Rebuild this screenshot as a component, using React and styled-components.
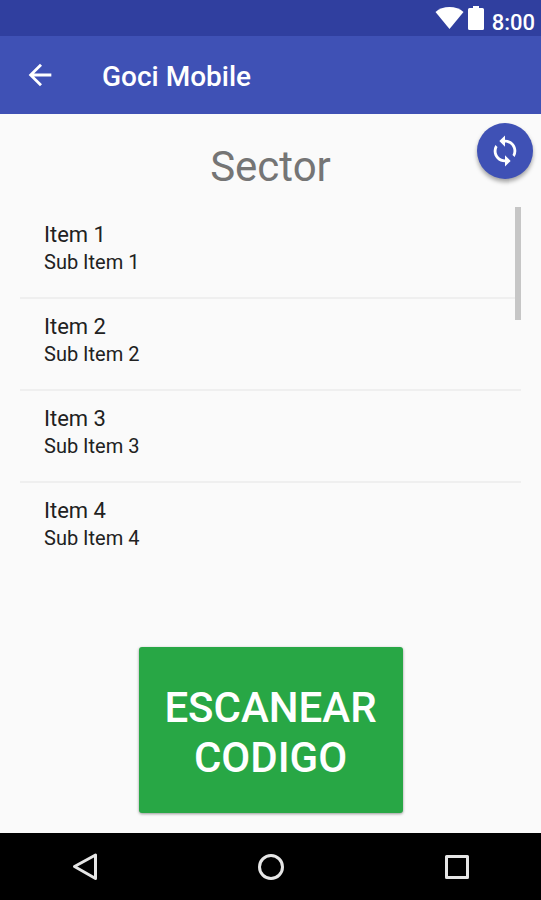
import React, { useState } from "react";
import styled, { createGlobalStyle } from "styled-components";
import { MdArrowBack, MdSync } from "react-icons/md";

const GlobalStyle = createGlobalStyle`
* {
  box-sizing: border-box;
}
body {
  margin: 0;
  background-color: #fafafa;
  font-family: Roboto, "Liberation Sans", sans-serif;
}
`
const Screen = styled.div`
display: flex;
flex-direction: column;
min-height: 100vh;
background-color: #fafafa;
`
const StatusBar = styled.div`
display: flex;
justify-content: flex-end;
gap: 4px;
height: 36px;
padding: 6px 6px 0 0;
background-color: #303f9f;
color: white;
`
const Clock = styled.span`
font-size: 22px;
line-height: 34px;
font-weight: 500;
margin-left: 4px;
`
const Toolbar = styled.header`
display: flex;
align-items: center;
gap: 45px;
height: 78px;
padding: 0 23px;
background-color: #3f51b5;
color: white;
`
const IconButton = styled.button`
display: flex;
align-items: center;
justify-content: center;
padding: 0;
border: none;
background: none;
color: inherit;
font-size: 34px;
cursor: pointer;
`
const Title = styled.h1`
margin: 0;
padding-top: 4px;
font-size: 28px;
line-height: 32px;
font-weight: 500;
`
const Content = styled.main`
position: relative;
display: flex;
flex-direction: column;
flex: 1;
padding: 25px 20px 20px;
`
const SyncButton = styled(IconButton)`
position: absolute;
top: 9px;
right: 8px;
width: 56px;
height: 56px;
border-radius: 50%;
background-color: #3f51b5;
color: white;
box-shadow: 0 3px 4px rgba(0, 0, 0, 0.35);
`
const Heading = styled.h2`
margin: 0;
font-size: 42px;
line-height: 56px;
font-weight: 400;
text-align: center;
color: #757575;
`
const ListBox = styled.div`
position: relative;
flex: 1;
margin: 12px 0 20px;
`
const List = styled.ul`
margin: 0;
padding: 0;
list-style: none;
`
const Row = styled.li`
height: 92px;
padding: 14px 24px 0;
color: #212121;
border-bottom: 2px solid #efefef;
&:last-child {
  border-bottom: none;
}
`
const ItemName = styled.p`
margin: 0;
font-size: 22px;
line-height: 28px;
`
const SubItem = styled.p`
margin: 0;
font-size: 20px;
line-height: 26px;
`
const ScrollThumb = styled.div`
position: absolute;
top: 0;
right: 0;
width: 6px;
height: 113px;
background-color: #c6c6c6;
`
const ScanButton = styled.button`
align-self: center;
width: 264px;
padding: 36px 24px 30px;
border: none;
border-radius: 3px;
background-color: #28a745;
color: white;
font-family: inherit;
font-size: 42px;
line-height: 50px;
font-weight: 500;
text-transform: uppercase;
box-shadow: 0 1px 3px rgba(0, 0, 0, 0.4);
cursor: pointer;
`
const NavBar = styled.nav`
display: flex;
align-items: center;
justify-content: space-between;
height: 67px;
padding: 0 70px;
background-color: black;
color: #e6e6e6;
`

const sectors = [
  { id: 1, name: "Item 1", sub: "Sub Item 1" },
  { id: 2, name: "Item 2", sub: "Sub Item 2" },
  { id: 3, name: "Item 3", sub: "Sub Item 3" },
  { id: 4, name: "Item 4", sub: "Sub Item 4" },
];

const WifiIcon = () => (
  <svg width="29" height="24" viewBox="0 0 29 24" fill="currentColor">
    <path d="M14.5 23 L0.5 6 C4 2.8 9 1 14.5 1 S25 2.8 28.5 6 Z" />
  </svg>
);

const BatteryIcon = () => (
  <svg width="16" height="24" viewBox="0 0 16 24" fill="currentColor">
    <path d="M5 0h6v2h3.5q1.5 0 1.500 1.500v19q0 1.500-1.500 1.500h-13q-1.500 0-1.500-1.500v-19q0-1.500 1.500-1.500H5z" />
  </svg>
);

const NavIcon = ({ children }) => (
  <svg width="30" height="30" viewBox="0 0 30 30" fill="none" stroke="currentColor" strokeWidth="3" strokeLinejoin="round">
    {children}
  </svg>
);

const App = () => {

  const [items, setItems] = useState(sectors);

  const reload = () => setItems([...sectors]);

  return (
    <>
      <GlobalStyle />
      <Screen>
        <StatusBar>
          <WifiIcon />
          <BatteryIcon />
          <Clock>8:00</Clock>
        </StatusBar>
        <Toolbar>
          <IconButton aria-label="Volver"><MdArrowBack /></IconButton>
          <Title>Goci Mobile</Title>
        </Toolbar>
        <Content>
          <Heading>Sector</Heading>
          <SyncButton aria-label="Actualizar" onClick={reload}><MdSync /></SyncButton>
          <ListBox>
            <List>
              {items.map((cur) => (
                <Row key={cur.id}>
                  <ItemName>{cur.name}</ItemName>
                  <SubItem>{cur.sub}</SubItem>
                </Row>
              ))}
            </List>
            <ScrollThumb />
          </ListBox>
          <ScanButton>Escanear codigo</ScanButton>
        </Content>
        <NavBar>
          <IconButton aria-label="Atrás">
            <NavIcon><path d="M25.500 3v23.500L4.500 14.500z" /></NavIcon>
          </IconButton>
          <IconButton aria-label="Inicio">
            <NavIcon><circle cx="15" cy="15" r="11.500" /></NavIcon>
          </IconButton>
          <IconButton aria-label="Recientes">
            <NavIcon><rect x="5.500" y="4.500" width="21" height="21" /></NavIcon>
          </IconButton>
        </NavBar>
      </Screen>
    </>
  );
};

export default App;
